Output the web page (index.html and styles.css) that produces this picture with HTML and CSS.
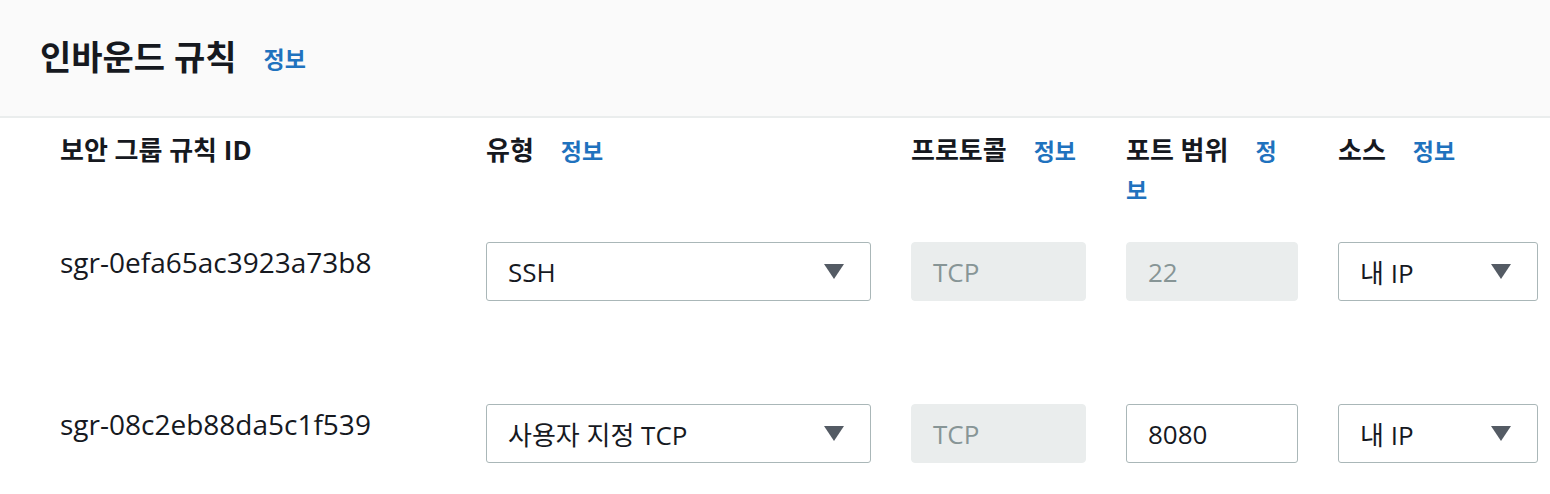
FILE: index.html
```html
<!DOCTYPE html>
<html lang="ko">
<head>
  <meta charset="UTF-8">
  <title>인바운드 규칙</title>
  <link rel="stylesheet" href="styles.css">
</head>
<body>
  <section class="panel">
    <header class="panel-header">
      <h2>인바운드 규칙</h2>
      <a class="info-link info-link-lg">정보</a>
    </header>

    <div class="rules">
      <div class="rule-row rule-head">
        <div class="col-label">보안 그룹 규칙 ID</div>
        <div class="col-label">유형<a class="info-link">정보</a></div>
        <div class="col-label">프로토콜<a class="info-link">정보</a></div>
        <div class="col-label col-narrow">포트 범위<a class="info-link">정보</a></div>
        <div class="col-label">소스<a class="info-link">정보</a></div>
      </div>

      <div class="rule-row">
        <div class="rule-id">sgr-0efa65ac3923a73b8</div>
        <div class="field select">SSH<span class="caret"></span></div>
        <div class="field disabled">TCP</div>
        <div class="field disabled">22</div>
        <div class="field select">내 IP<span class="caret"></span></div>
      </div>

      <div class="rule-row">
        <div class="rule-id">sgr-08c2eb88da5c1f539</div>
        <div class="field select">사용자 지정 TCP<span class="caret"></span></div>
        <div class="field disabled">TCP</div>
        <div class="field">8080</div>
        <div class="field select">내 IP<span class="caret"></span></div>
      </div>
    </div>
  </section>
</body>
</html>
```

FILE: styles.css
```css
/* 기본 */
body, h2 { margin: 0; padding: 0; }
body {
  background: #fff;
  color: #16191f;
  font-family: 'Open Sans', 'Noto Sans CJK KR', sans-serif;
}
a { text-decoration: none; cursor: pointer; }

/* 헤더 */
.panel-header {
  height: 116px;
  display: flex;
  align-items: center;
  padding: 0 40px;
  background: #fafafa;
  border-bottom: 2px solid #eaeded;
}
.panel-header h2 {
  font-size: 34px;
  font-weight: 700;
  margin-top: -6px;
}

.info-link {
  color: #1f72be;
  font-size: 23px;
  font-weight: 700;
  margin-left: 27px;
}
.info-link-lg { margin-left: 27px; }

/* 규칙 테이블 */
.rules { padding: 13px 12px 0 60px; }

.rule-row {
  display: grid;
  grid-template-columns: 386px 385px 175px 172px 200px;
  column-gap: 40px;
  align-items: start;
  margin-bottom: 103px;
}
.rule-row:last-child { margin-bottom: 0; }
.rule-head { margin-bottom: 33px; }

.col-label {
  font-size: 26px;
  font-weight: 700;
  line-height: 38px;
}
.col-narrow { padding-right: 16px; }

.rule-id {
  font-size: 28px;
  line-height: 38px;
  padding-top: 1px;
}

/* 입력 필드 */
.field {
  height: 59px;
  box-sizing: border-box;
  display: flex;
  align-items: center;
  justify-content: space-between;
  padding: 0 26px 0 21px;
  font-size: 26px;
  border: 1px solid #aab7b8;
  border-radius: 3px;
  background: #fff;
}
.field.disabled {
  border-color: #eaeded;
  background: #eaeded;
  color: #879596;
  border-radius: 4px;
}
.caret {
  width: 0;
  height: 0;
  border-left: 10px solid transparent;
  border-right: 10px solid transparent;
  border-top: 15px solid #545b64;
}
```
